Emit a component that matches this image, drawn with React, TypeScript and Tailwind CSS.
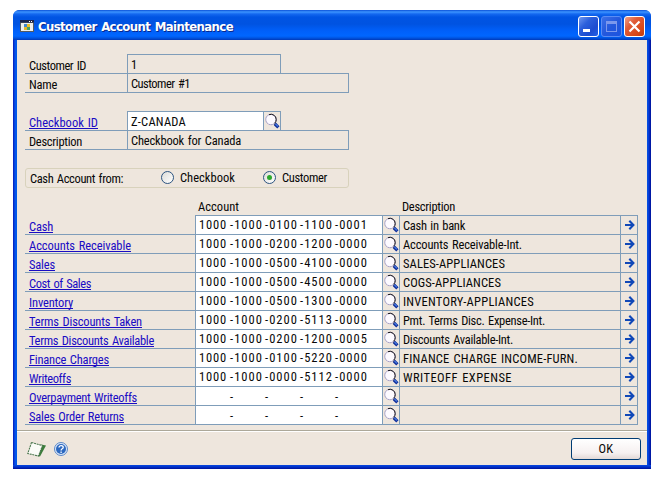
import { useLayoutEffect, useRef, useState } from "react";
import clsx from "clsx";

/* Text tracked so that it fills a given width. */
function Fit({ w, className, children }: { w: number; className?: string; children: string }) {
  const ref = useRef<HTMLSpanElement>(null);
  const [gap, setGap] = useState(0);
  useLayoutEffect(() => {
    const el = ref.current;
    if (el) setGap((w - el.getBoundingClientRect().width) / Math.max(1, children.length));
  }, []);
  return (
    <span ref={ref} className={clsx("inline-block whitespace-pre", className)} style={{ letterSpacing: gap }}>
      {children}
    </span>
  );
}

function Link({ w, children }: { w: number; children: string }) {
  return (
    <Fit w={w} className="text-[#1a0cc4] underline decoration-1 underline-offset-[1px] [text-decoration-skip-ink:none]">
      {children}
    </Fit>
  );
}

function Lookup() {
  return (
    <svg width="16" height="18" viewBox="0 0 16 18" className="block">
      <path d="M10 11l1.400 1.400" stroke="#151c3c" strokeWidth="1.600" />
      <circle cx="7" cy="7.500" r="5.200" fill="#fdfaff" stroke="#8c86b8" strokeWidth="1" strokeDasharray="1.500 .600" />
      <path d="M5 2.700a5.200 5.200 0 0 1 7.200 4.800 5.200 5.200 0 0 1-1.300 3.500" fill="none" stroke="#151318" strokeWidth="1" />
      <path d="M11 12l3.400 3.400" stroke="#12309c" strokeWidth="3.200" />
      <path d="M11.400 11.900l2.500 2.500" stroke="#4c80e8" strokeWidth="1.100" />
    </svg>
  );
}

function Arrow() {
  return (
    <svg width="10" height="10" viewBox="0 0 10 10" className="block">
      <path d="M0 5h8M4.300 .800L8.400 5l-4.100 4.200" fill="none" stroke="#1048b8" strokeWidth="2.100" />
    </svg>
  );
}

type Row = { label: string; lw: number; acct: string[]; desc?: string; dw?: number };
const rows: Row[] = [
  { label: "Cash", lw: 24, acct: ["1000", "-1000", "-0100", "-1100", "-0001"], desc: "Cash in bank", dw: 62 },
  { label: "Accounts Receivable", lw: 102, acct: ["1000", "-1000", "-0200", "-1200", "-0000"], desc: "Accounts Receivable-Int.", dw: 119 },
  { label: "Sales", lw: 26, acct: ["1000", "-1000", "-0500", "-4100", "-0000"], desc: "SALES-APPLIANCES", dw: 102 },
  { label: "Cost of Sales", lw: 62, acct: ["1000", "-1000", "-0500", "-4500", "-0000"], desc: "COGS-APPLIANCES", dw: 98 },
  { label: "Inventory", lw: 44, acct: ["1000", "-1000", "-0500", "-1300", "-0000"], desc: "INVENTORY-APPLIANCES", dw: 131 },
  { label: "Terms Discounts Taken", lw: 113, acct: ["1000", "-1000", "-0200", "-5113", "-0000"], desc: "Pmt. Terms Disc. Expense-Int.", dw: 142 },
  { label: "Terms Discounts Available", lw: 125, acct: ["1000", "-1000", "-0200", "-1200", "-0005"], desc: "Discounts Available-Int.", dw: 110 },
  { label: "Finance Charges", lw: 80, acct: ["1000", "-1000", "-0100", "-5220", "-0000"], desc: "FINANCE CHARGE INCOME-FURN.", dw: 175 },
  { label: "Writeoffs", lw: 42, acct: ["1000", "-1000", "-0000", "-5112", "-0000"], desc: "WRITEOFF EXPENSE", dw: 109 },
  { label: "Overpayment Writeoffs", lw: 108, acct: ["", "-", "-", "-", "-"] },
  { label: "Sales Order Returns", lw: 95, acct: ["", "-", "-", "-", "-"] },
];

function TitleBar() {
  return (
    <header className="flex h-[30px] items-start rounded-t-[6px] bg-[linear-gradient(180deg,#0a50d8_0,#3c94ff_2px,#1468f0_4px,#0054e3_7px,#0053e1_14px,#0060fa_21px,#0066ff_26px,#0054e0_28px,#0038b8_30px)] pl-[7px] pr-[6px]">
      <svg width="14" height="12" viewBox="0 0 14 12" className="mt-[10px] block">
        <path d="M0 0h14v12H0z" fill="#555a60" />
        <path d="M1 3h12v8H1z" fill="#eef0ec" />
        <path d="M0 0h14v2.5H0z" fill="#1a2650" />
        <path d="M9 1h1v1H9zM11 1h1v1h-1z" fill="#fff" />
        <path d="M4 4h3v3H4z" fill="#4088d0" />
        <path d="M7 4h3v3H7z" fill="#f0c020" />
        <path d="M4 7h3v3H4z" fill="#e8b828" />
        <path d="M7 7h3v3H7z" fill="#48a068" />
      </svg>
      <h1 className="ml-[4px] mt-[7px] font-['DejaVu_Sans_Condensed','DejaVu_Sans',sans-serif] text-[13px] font-bold leading-[20px] text-white [font-stretch:condensed] [text-shadow:1px_1px_0_#08288c]">
        <Fit w={195}>Customer Account Maintenance</Fit>
      </h1>
      <div className="ml-auto mt-[6px] flex gap-[2px]">
        <div className="h-[21px] w-[21px] rounded-[3px] border border-white bg-[linear-gradient(135deg,#7098f0,#2c60dc_35%,#1c4cd0_70%,#2060e8)] pl-1 pt-3">
          <div className="h-[3px] w-[7px] bg-white" />
        </div>
        <div className="h-[21px] w-[21px] rounded-[3px] border border-[#5a8cf4] bg-[linear-gradient(135deg,#3c70e8,#2458dc_50%,#1c54e0)] pl-1 pt-1">
          <div className="h-[11px] w-[11px] border border-t-[3px] border-[#7c98ec]" />
        </div>
        <div className="h-[21px] w-[21px] rounded-[3px] border border-white bg-[linear-gradient(135deg,#f0a088,#e05c38_35%,#d84818_75%,#c03c10)]">
          <svg width="19" height="19" viewBox="0 0 19 19">
            <path d="M4.5 4.5l10 10M14.5 4.5l-10 10" stroke="#fff" strokeWidth="2.2" />
          </svg>
        </div>
      </div>
    </header>
  );
}

export default function App() {
  return (
    <div className="flex h-[483px] w-[659px] bg-white pl-[13px] pt-[10px] font-[Roboto,sans-serif] text-[12.5px] leading-[15px] text-[#080808] [font-stretch:85%] [word-spacing:1px]">
      <div className="flex h-[459px] w-[638px] flex-col rounded-t-[7px] bg-[linear-gradient(90deg,#0018b0_0,#0838d8_1px,#0060f0_3px,#0050e0_4px,#0050e0_634px,#0848e0_635px,#0020b8_637px,#001090_638px)]">
        <TitleBar />
        <div className="mx-1 flex h-[425px] flex-col bg-[#eee6dd]">
          <main className="flex h-[390px] flex-col pl-2 pt-[14px]">
            {/* Customer */}
            <section className="flex flex-col">
              <div className="flex h-5">
                <div className="h-5 w-[102px] border-b border-[#7f9db9] pl-1 pt-[4px]"><Fit w={57}>Customer ID</Fit></div>
                <div className="h-5 w-[154px] border border-[#7f9db9] pl-[3px] pt-[2px]">1</div>
                <div className="mt-[19px] h-px w-[68px] bg-[#7f9db9]" />
              </div>
              <div className="flex h-[19px]">
                <div className="w-[102px] border-b border-[#7f9db9] pl-1 pt-[3px]"><Fit w={28}>Name</Fit></div>
                <div className="w-[222px] border border-t-0 border-[#7f9db9] pl-[3px] pt-[2px]"><Fit w={59}>Customer #1</Fit></div>
              </div>
            </section>

            {/* Checkbook */}
            <section className="mt-[18px] flex flex-col">
              <div className="flex h-5">
                <div className="w-[102px] border-b border-[#7f9db9] pl-1 pt-[4px]"><Link w={69}>Checkbook ID</Link></div>
                <div className="w-[137px] border border-[#7f9db9] bg-white pl-[3px] pt-[2px]"><Fit w={55}>Z-CANADA</Fit></div>
                <div className="w-[17px] border border-l-0 border-[#7f9db9]"><Lookup /></div>
                <div className="mt-[19px] h-px w-[68px] bg-[#7f9db9]" />
              </div>
              <div className="flex h-[19px]">
                <div className="w-[102px] border-b border-[#7f9db9] pl-1 pt-[3px]"><Fit w={53}>Description</Fit></div>
                <div className="w-[222px] border border-t-0 border-[#7f9db9] pl-[3px] pt-[2px]"><Fit w={110}>Checkbook for Canada</Fit></div>
              </div>
            </section>

            {/* Account source */}
            <section className="mt-[18px] flex h-5 w-[324px] items-start rounded-[3px] border border-[#d8d2bc] pl-1">
              <div className="w-[131px] pt-[2px]"><Fit w={93}>Cash Account from:</Fit></div>
              <div className="mt-[2px] h-[13px] w-[13px] rounded-full border border-[#2c5480] bg-[linear-gradient(135deg,#dcdcd8,#fff)]" />
              <div className="ml-[6px] w-[83px] pt-[1px]"><Fit w={55}>Checkbook</Fit></div>
              <div className="mt-[2px] flex h-[13px] w-[13px] items-center justify-center rounded-full border border-[#2c5480] bg-[linear-gradient(135deg,#dcdcd8,#fff)]">
                <div className="h-[5px] w-[5px] rounded-full bg-[#2ca82c]" />
              </div>
              <div className="ml-[6px] pt-[1px]"><Fit w={45}>Customer</Fit></div>
            </section>

            {/* Posting accounts */}
            <section className="mt-[11px] flex flex-col">
              <div className="flex h-4">
                <div className="w-[377px] pl-[173px]"><Fit w={41}>Account</Fit></div>
                <Fit w={53}>Description</Fit>
              </div>
              <div className="ml-[170px] h-px w-[443px] bg-[#7f9db9]" />
              {rows.map((r) => (
                <div key={r.label} className="flex h-[19px]">
                  <div className="w-[170px] border-b border-[#7f9db9] pl-1 pt-[3px]"><Link w={r.lw}>{r.label}</Link></div>
                  <div className="flex w-[188px] border-x border-b border-[#7f9db9] bg-white pl-[3px] pt-[1px]">
                    {r.acct.map((s, i) => (
                      <div key={i} className={i === 0 ? "w-[31px]" : clsx("w-[35px]", s === "-" && "pt-px")}>
                        {s.length > 1 ? <Fit w={i === 0 ? 28 : 33}>{s}</Fit> : s}
                      </div>
                    ))}
                  </div>
                  <div className="w-[17px] border-b border-r border-[#7f9db9]"><Lookup /></div>
                  <div className="w-[221px] border-b border-r border-[#7f9db9] pl-[3px] pt-[2px]">
                    {r.desc && <Fit w={r.dw ?? 0}>{r.desc}</Fit>}
                  </div>
                  <div className="w-[17px] border-b border-r border-[#7f9db9] pl-1 pt-1"><Arrow /></div>
                </div>
              ))}
            </section>
          </main>

          {/* Footer */}
          <footer className="flex h-[35px] border-t border-[#aca899] shadow-[inset_0_1px_0_#fff]">
            <svg width="20" height="17" viewBox="0 0 20 17" className="ml-[10px] mt-[10px] block">
              <path d="M14 3.500l5 1-6 11-4-1z" fill="#3c7c3c" />
              <path d="M4.500 1.500l11 3-4 10.500L.800 12.500z" fill="#fbfcf8" stroke="#4c7850" strokeWidth="1.100" strokeDasharray="2 .700" />
            </svg>
            <svg width="14" height="14" viewBox="0 0 14 14" className="ml-[7px] mt-[11px] block">
              <circle cx="7" cy="7" r="6.500" fill="#dce8f8" stroke="#5c88c8" />
              <circle cx="7" cy="7" r="5" fill="#2c68c0" />
              <path d="M5 5.600c0-2.600 4.200-2.400 4.200-.200C9.200 6.900 7.100 6.700 7.100 8.400M7.100 9.500v1.500" fill="none" stroke="#fff" strokeWidth="1.300" />
            </svg>
            <button className="ml-auto mr-[6px] mt-[7px] flex h-[22px] w-[70px] justify-center rounded-[3px] border border-[#003c74] bg-[linear-gradient(180deg,#fff,#f6f0f0_70%,#e2d8d6)] pt-[2px]">
              <Fit w={15}>OK</Fit>
            </button>
          </footer>
        </div>
        <div className="h-1 bg-[linear-gradient(180deg,#0848e0,#0030c8_2px,#001098)]" />
      </div>
    </div>
  );
}
